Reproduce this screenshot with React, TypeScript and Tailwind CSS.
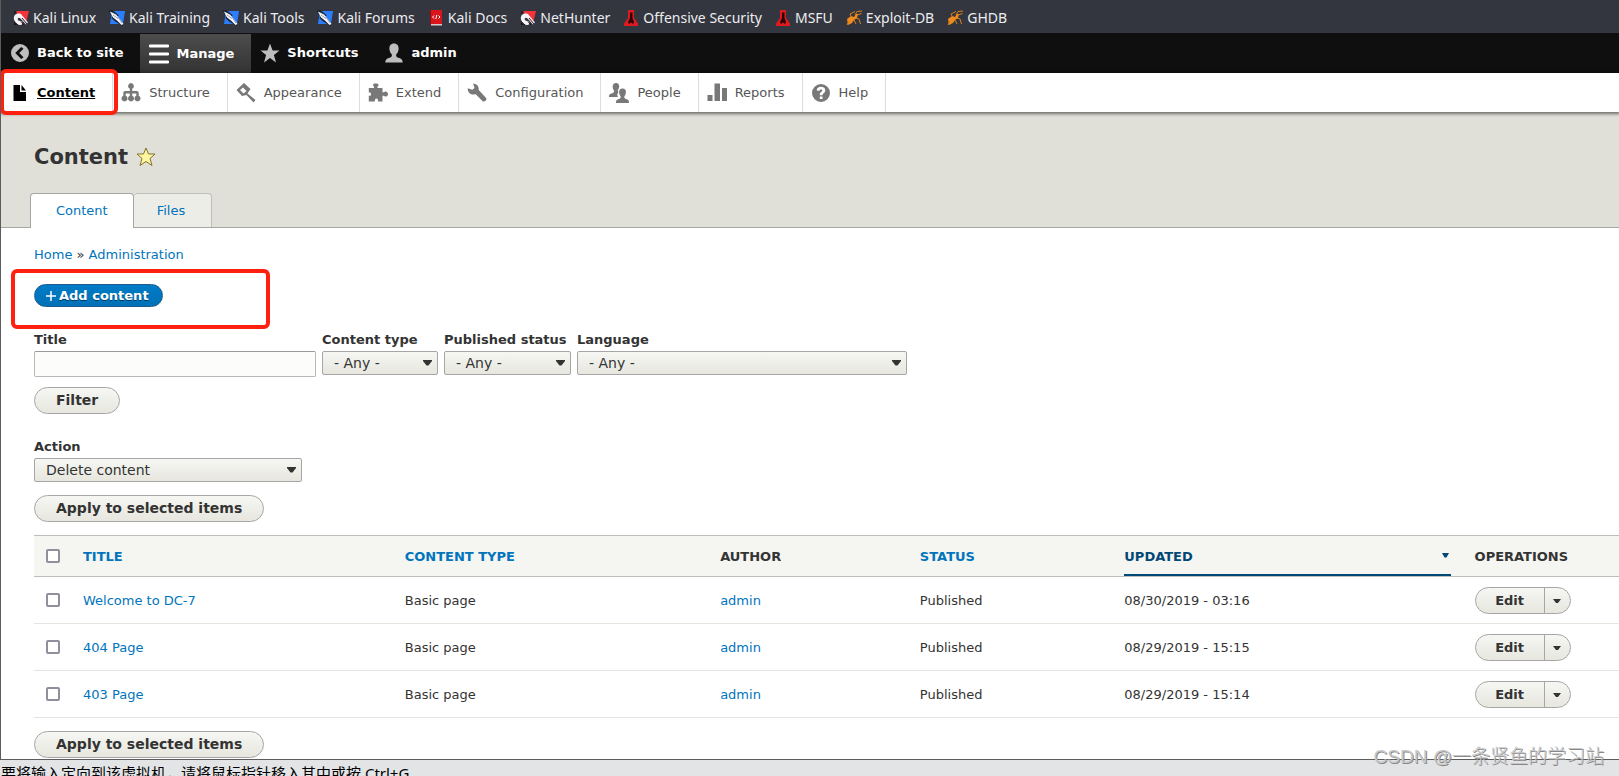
import { clsx } from "clsx";

type IconName =
  | "back"
  | "menu"
  | "star"
  | "user"
  | "file"
  | "structure"
  | "appearance"
  | "extend"
  | "config"
  | "people"
  | "reports"
  | "help";

type BookmarkKind = "dragon" | "kali" | "docs" | "offsec" | "bug";

const bookmarks: { label: string; kind: BookmarkKind }[] = [
  { label: "Kali Linux", kind: "dragon" },
  { label: "Kali Training", kind: "kali" },
  { label: "Kali Tools", kind: "kali" },
  { label: "Kali Forums", kind: "kali" },
  { label: "Kali Docs", kind: "docs" },
  { label: "NetHunter", kind: "dragon" },
  { label: "Offensive Security", kind: "offsec" },
  { label: "MSFU", kind: "offsec" },
  { label: "Exploit-DB", kind: "bug" },
  { label: "GHDB", kind: "bug" },
];

const toolbar: { label: string; icon: IconName }[] = [
  { label: "Back to site", icon: "back" },
  { label: "Manage", icon: "menu" },
  { label: "Shortcuts", icon: "star" },
  { label: "admin", icon: "user" },
];

const tray: { label: string; icon: IconName }[] = [
  { label: "Content", icon: "file" },
  { label: "Structure", icon: "structure" },
  { label: "Appearance", icon: "appearance" },
  { label: "Extend", icon: "extend" },
  { label: "Configuration", icon: "config" },
  { label: "People", icon: "people" },
  { label: "Reports", icon: "reports" },
  { label: "Help", icon: "help" },
];

const rows = [
  { title: "Welcome to DC-7", updated: "08/30/2019 - 03:16" },
  { title: "404 Page", updated: "08/29/2019 - 15:15" },
  { title: "403 Page", updated: "08/29/2019 - 15:14" },
];

const pill =
  "rounded-full border border-[#a6a6a6] bg-linear-to-b from-[#f6f6f3] to-[#e7e7df] font-bold text-[#333] hover:to-[#f6f6f3]";
const button = clsx(pill, "block h-[27px] px-[21px] pb-[2px] text-[14px] leading-4");
const link = "text-[#0074bd] hover:underline";
const cell = "px-3 pt-[2px]";

function BookmarkIcon({ kind }: { kind: BookmarkKind }) {
  return (
    <svg width="16" height="16" viewBox="0 0 16 16" className="shrink-0" aria-hidden="true">
      {kind === "dragon" && (
        <>
          <path d="M3 1h13l-3 12-9-9z" fill="#f5333b" />
          <path d="M1 1.500h3L1.500 4zM1 11l3 4H1z" fill="#17181c" />
          <path d="M1 9.500C0 5 4 2.500 8 4l7 8.500-2 2-5.500-6C6 7 4 8 5 10c1 1.500 3 .5 4.500 2l-1 3C5 15.500 2 13.500 1 9.500z" fill="#f3f3f5" />
          <path d="M1 11.500l4 3.500M8 11.500l3 3.500M9 8l5 6" stroke="#3a1020" fill="none" />
        </>
      )}
      {kind === "kali" && (
        <>
          <path d="M3 1h13l-2 13H1z" fill="#2b7dfb" />
          <path d="M0 1h3l6 5M3 7l4 4 7 4" stroke="#20242e" strokeWidth="2" fill="none" />
          <path d="M1 1.500l6 3 3.500 4L14.500 14l-2 1-4.500-4.500-4-3z" fill="#f4f6fa" />
          <path d="M4 5l5 3.500M9 7l4 6" stroke="#7b8698" strokeWidth=".8" fill="none" />
        </>
      )}
      {kind === "docs" && (
        <>
          <path d="M3 0h11v15H2V1z" fill="#d9151c" />
          <path d="M2 1l1-1v15H2z" fill="#8e0d12" />
          <path d="M3 14h11v1.500H3z" fill="#d5c9c9" />
          <path d="M6 5.500L4.500 7 6 8.500M10.500 5.500L12 7l-1.500 1.500M8.800 5l-1 4" stroke="#fff" fill="none" />
        </>
      )}
      {kind === "offsec" && (
        <>
          <path d="M5 0h6v8l4 5.500V16H1v-2.500L5 8z" fill="#dc1a20" />
          <path d="M7 2.500h2.500V8l1.500 4-1 2-2-1.500L6 14l-1-2 2-4z" fill="#2a0507" />
        </>
      )}
      {kind === "bug" && (
        <>
          <path d="M1 9l4-3 3 1 2-3h2l-1 4-3 2-2 3-4 2z" fill="#f08a1c" />
          <path d="M5 6L4 4l5-2.500M9 5l2-3.500L16 1M11 5l4.500-1.500M10 8l3 1 1.500 5M8 10l2 4M3 11l-2 4" stroke="#d9801c" fill="none" />
        </>
      )}
    </svg>
  );
}

function Icon({ name, className }: { name: IconName; className?: string }) {
  return (
    <svg width="20" height="20" viewBox="0 0 20 20" fill="currentColor" className={className} aria-hidden="true">
      {name === "back" && (
        <path fillRule="evenodd" d="M10 1a9 9 0 100 18 9 9 0 000-18zm3.500 4.800L9.300 10l4.200 4.200-2.300 1.800-6-6 6-6z" />
      )}
      {name === "menu" && (
        <path d="M1 .5h18a1 1 0 011 1v1a1 1 0 01-1 1H1a1 1 0 01-1-1v-1a1 1 0 011-1zM1 8.500h18a1 1 0 011 1v1a1 1 0 01-1 1H1a1 1 0 01-1-1v-1a1 1 0 011-1zM1 16.500h18a1 1 0 011 1v1a1 1 0 01-1 1H1a1 1 0 01-1-1v-1a1 1 0 011-1z" />
      )}
      {name === "star" && <path d="M10 .5l2.600 7H19.500l-5.600 4.500L16 19.500 10 15 4 19.500 6.100 12 .5 7.500h6.900z" />}
      {name === "user" && (
        <path d="M10 .5c3.300 0 4.700 2.400 4.600 5.200-.1 2.300-1 4.300-2.300 5.500-.6 2 .2 3 2 3.600 2.600.8 4.200 1.400 4.400 4.700H1.300c.2-3.300 1.800-3.900 4.400-4.700 1.800-.6 2.600-1.600 2-3.600-1.300-1.200-2.200-3.200-2.300-5.500C5.300 2.900 6.700.5 10 .5z" />
      )}
      {name === "file" && <path d="M4.500 2H11v7h6v9H4.500zM12.500 2l4.500 5.500h-4.500z" />}
      {name === "structure" && (
        <path d="M10 0a3 3 0 011.200 5.700V8h4.300c1.700 0 2.200.8 2.200 2.200v2.500a3 3 0 11-2.400 0v-2.300h-4.100v2.300a3 3 0 11-2.400 0v-2.300H4.700v2.300a3 3 0 11-2.400 0v-2.500C2.300 8.800 2.800 8 4.500 8h4.300V5.700A3 3 0 0110 0z" />
      )}
      {name === "appearance" && (
        <path fillRule="evenodd" d="M.5 7L8 0l6.500 6-3 4.500 8 6.500-2 2.500-7-7.500L6 13zm3.500 0l3.500 3.500L10.500 8 7 4.500z" />
      )}
      {name === "extend" && (
        <path d="M6 5V3.500L4.800 2.200 6 .5h3.500l1.300 1.700L9.500 3.500V5h5v4.200h1.200C16.700 7.800 20 8.300 20 11s-3.300 3.200-4.300 1.800h-1.200v5.700h-4.500c.3-2-.4-3-1.500-3s-2 1-1.700 3H.8v-5.800c1.300 0 2.200.3 2.200-1.500S2.100 9.500.8 9.500V5z" />
      )}
      {name === "config" && (
        <path d="M.7 5.200l4.700 1.600L7.500 5 6.200.5c3.300.1 6 2.600 5.500 6.600l7.200 7.700c1.700 2-1.600 5-3.500 3.200L8.500 11C4.500 12.800.4 9.500.7 5.200z" />
      )}
      {name === "people" && (
        <path d="M7 0c2.200 0 3.300 1.600 3.200 3.500-.1 1.500-.6 2.500-1.400 3.500l.5 2.500C7.800 11 8.300 12.500 9 14H0c0-3 1.200-3.200 3.300-3.800 1.500-.4 2-1 1.700-2.700C4.100 6.500 3.700 5 3.700 3.500 3.700 1.400 4.900 0 7 0zM13.500 5.500c2.400 0 3.500 1.700 3.400 3.800-.1 1.600-.7 3-1.500 3.900-.4 1.500.2 2.300 1.500 2.700 2.200.6 3.100 1 3.100 4.100H7c0-3.100.9-3.500 3.100-4.100 1.300-.4 1.900-1.200 1.500-2.700-.8-.9-1.400-2.300-1.500-3.900-.1-2.100 1-3.800 3.400-3.800z" />
      )}
      {name === "reports" && <path d="M.5 12h5v6h-5zM7.500.5h5.500V18H7.500zM15 5h5v13h-5z" />}
      {name === "help" && (
        <path
          fillRule="evenodd"
          d="M10 1a9 9 0 100 18 9 9 0 000-18zm-1.200 12.500h2.700V16H8.800zM5.700 7.500C5.800 5 7.500 3.800 10 3.800s4.300 1.400 4.300 3.600c0 2.600-2.800 2.500-2.800 4.800H8.800c0-3.200 2.500-3.300 2.500-4.600 0-.8-.5-1.200-1.300-1.200-.9 0-1.400.4-1.500 1.400z"
        />
      )}
    </svg>
  );
}

function SelectField({ id, label, options, className }: { id: string; label: string; options: string[]; className: string }) {
  return (
    <div className={className}>
      <label htmlFor={id} className="block leading-[22px] font-bold">
        {label}
      </label>
      <div className="relative">
        <select
          id={id}
          className="block h-6 w-full appearance-none rounded-xs border border-[#a6a6a6] bg-linear-to-b from-[#f6f6f3] to-[#e7e7df] pr-6 pl-[11px] text-[14px] leading-5 text-[#333]"
        >
          {options.map((option) => (
            <option key={option}>{option}</option>
          ))}
        </select>
        <svg width="9" height="6" viewBox="0 0 9 6" className="pointer-events-none absolute top-[9px] right-[6px]" aria-hidden="true">
          <path d="M0 0h9v1L5.500 5.500h-2L0 1z" fill="#333" />
        </svg>
      </div>
    </div>
  );
}

function Checkbox({ label }: { label: string }) {
  return (
    <input
      type="checkbox"
      aria-label={label}
      className="block size-[14px] appearance-none rounded-xs border-2 border-[#8f8f9d] bg-white checked:bg-[#0074bd]"
    />
  );
}

function ContentTable() {
  return (
    <table className="w-full table-fixed border-collapse text-left">
      <colgroup>
        <col className="w-[37px]" />
        <col className="w-[20.3%]" />
        <col className="w-[19.9%]" />
        <col className="w-[12.6%]" />
        <col className="w-[12.9%]" />
        <col className="w-[22.1%]" />
        <col />
      </colgroup>
      <thead>
        <tr className="h-[41px] border-y border-[#bfbfba] bg-[#f5f5f2] uppercase">
          <th className="pl-3">
            <Checkbox label="Select all rows" />
          </th>
          <th className={cell}>
            <a href="#title" className={link}>Title</a>
          </th>
          <th className={cell}>
            <a href="#type" className={link}>Content type</a>
          </th>
          <th className={cell}>Author</th>
          <th className={cell}>
            <a href="#status" className={link}>Status</a>
          </th>
          <th className="px-3">
            <a href="#updated" className="flex h-10 items-center justify-between border-b-2 border-[#004875] pt-1 pr-[2px] text-[#004875]">
              Updated
              <svg width="7" height="5" viewBox="0 0 7 5" className="mb-1" aria-hidden="true">
                <path d="M0 0h7L4.500 4.500h-2z" fill="#004875" />
              </svg>
            </a>
          </th>
          <th className={cell}>Operations</th>
        </tr>
      </thead>
      <tbody>
        {rows.map((row) => (
          <tr key={row.title} className="h-[47px] border-b border-[#e6e4df]">
            <td className="pl-3">
              <Checkbox label={`Select ${row.title}`} />
            </td>
            <td className={cell}>
              <a href="#node" className={link}>{row.title}</a>
            </td>
            <td className={cell}>Basic page</td>
            <td className={cell}>
              <a href="#admin" className={link}>admin</a>
            </td>
            <td className={cell}>Published</td>
            <td className={cell}>{row.updated}</td>
            <td className="px-3">
              <div className={clsx(pill, "flex h-[27px] w-24 overflow-hidden")}>
                <button className="flex-1 border-r border-[#a6a6a6] pt-px">Edit</button>
                <button className="flex w-[25px] items-center justify-center pt-[2px]" aria-label={`More actions for ${row.title}`}>
                  <svg width="8" height="4" viewBox="0 0 8 4" aria-hidden="true">
                    <path d="M0 0h8L5 4H3z" fill="#333" />
                  </svg>
                </button>
              </div>
            </td>
          </tr>
        ))}
      </tbody>
    </table>
  );
}

export default function App() {
  return (
    <div className="relative flex h-screen flex-col overflow-hidden bg-white font-['DejaVu_Sans',sans-serif] text-[13px] leading-5 text-[#333]">
      <div className="flex min-h-0 flex-1 flex-col overflow-hidden border-b border-l border-[#5c5c5c]">
        <nav className="flex h-[33px] shrink-0 items-center gap-[13px] bg-[#33363f] pt-[2px] pl-3 font-['Noto_Sans',sans-serif] text-[14px] text-[#ececee]">
          {bookmarks.map((item) => (
            <a key={item.label} href="#bookmark" className="flex items-center gap-1 whitespace-nowrap">
              <BookmarkIcon kind={item.kind} />
              {item.label}
            </a>
          ))}
        </nav>

        <nav className="flex h-10 shrink-0 bg-[#0f0f0f] font-bold text-white">
          {toolbar.map((item) => (
            <a
              key={item.label}
              href="#toolbar"
              className={clsx(
                "relative flex items-center pr-[17px] pl-9",
                item.icon === "menu" && "mt-px bg-linear-to-b from-[#4d4d4d] to-[#333]"
              )}
            >
              <Icon name={item.icon} className={clsx("absolute left-[9px]", item.icon === "menu" ? "text-white" : "text-[#bebebe]")} />
              {item.label}
            </a>
          ))}
        </nav>

        <nav className="relative z-10 flex h-[39px] shrink-0 bg-white shadow-[0_1px_3px_1px_rgba(0,0,0,0.5)]">
          {tray.map((item) => (
            <a
              key={item.label}
              href="#tray"
              className={clsx(
                "relative flex items-center border-r border-[#ddd] pr-[17px] pl-9",
                item.icon === "file" ? "font-bold text-black underline" : "text-[#565656]"
              )}
            >
              <Icon name={item.icon} className={clsx("absolute left-2", item.icon === "file" ? "text-black" : "text-[#787878]")} />
              {item.label}
            </a>
          ))}
          <div className="pointer-events-none absolute top-[-4px] left-[-1px] h-[46px] w-[118px] rounded-md border-4 border-[#ff2010]" />
        </nav>

        <header className="shrink-0 border-b border-[#a6a6a6] bg-[#e0e0d8] pt-[31px]">
          <div className="flex items-center gap-2 px-[33px]">
            <h1 className="text-[21px] leading-7 font-bold">Content</h1>
            <button aria-label="Add to shortcuts">
              <svg width="20" height="20" viewBox="0 0 20 20" className="block" aria-hidden="true">
                <path
                  d="M10 1l2.500 6h6.500l-5 4.500 2 7-6-4-6 4 2-7L1 7h6.500z"
                  fill="#fdf6a0"
                  stroke="#84702c"
                  strokeLinejoin="round"
                />
              </svg>
            </button>
          </div>
          <div className="-mb-px flex pt-[22px] pl-[29px]">
            <a href="#content" className="rounded-t-[4px] border border-b-0 border-[#a6a6a6] bg-white px-[25px] py-[7px] text-[#0074bd]">
              Content
            </a>
            <a href="#files" className="mb-px rounded-t-[4px] border border-b-0 border-l-0 border-[#bfbfba] bg-[#edede8] pt-[7px] pr-[26px] pb-[6px] pl-[23px] text-[#0074bd]">
              Files
            </a>
          </div>
        </header>

        <main className="pl-[33px]">
          <div className="pt-[17px]">
            <a href="#home" className={link}>Home</a> » <a href="#administration" className={link}>Administration</a>
          </div>
          <div className="relative pt-[19px]">
            <button className="flex h-[23px] items-center rounded-full border border-[#1e5c90] bg-linear-to-b from-[#007bc6] to-[#0071b8] pr-[13px] pl-[11px] font-bold text-white [text-shadow:0_1px_rgba(0,0,0,0.5)]">
              <svg width="10" height="10" viewBox="0 0 10 10" className="mr-[3px]" aria-hidden="true">
                <path d="M5 0v10M0 5h10" stroke="#fff" strokeWidth="1.500" />
              </svg>
              Add content
            </button>
            <div className="pointer-events-none absolute top-1 left-[-23px] h-[60px] w-[259px] rounded-md border-4 border-[#ff2010]" />
          </div>

          <form className="pt-[22px]" onSubmit={(e) => e.preventDefault()}>
            <div className="flex items-start gap-[6px]">
              <div className="w-[282px]">
                <label htmlFor="title" className="block leading-[22px] font-bold">Title</label>
                <input id="title" type="text" className="block h-[26px] w-full rounded-xs border border-[#b8b8b8] border-t-[#999] bg-[#fcfcfa] px-2" />
              </div>
              <SelectField id="type" label="Content type" options={["- Any -", "Article", "Basic page"]} className="w-[116px]" />
              <SelectField id="status" label="Published status" options={["- Any -", "Published", "Unpublished"]} className="w-[127px] whitespace-nowrap" />
              <SelectField id="language" label="Language" options={["- Any -", "English"]} className="w-[330px]" />
            </div>
            <button className={clsx(button, "mt-[10px]")}>Filter</button>
          </form>

          <form className="pt-[22px]" onSubmit={(e) => e.preventDefault()}>
            <SelectField id="action" label="Action" options={["Delete content", "Publish content"]} className="w-[268px]" />
            <button className={clsx(button, "my-[13px]")}>Apply to selected items</button>
            <ContentTable />
            <button className={clsx(button, "mt-[13px]")}>Apply to selected items</button>
          </form>
        </main>
      </div>

      <footer className="h-4 shrink-0 bg-[#e3e4e6] pt-[3px] pl-px font-['Noto_Sans','Noto_Sans_CJK_SC',sans-serif] text-[15px] leading-5 text-black">
        要将输入定向到该虚拟机，请将鼠标指针移入其中或按 Ctrl+G。
      </footer>

      <div className="pointer-events-none absolute right-[15px] bottom-[5px] font-['Liberation_Sans','Noto_Sans_CJK_SC',sans-serif] text-[19px] leading-7 font-light text-[#c8c8c8] [text-shadow:1px_1px_0_#888]">
        CSDN @一条贤鱼的学习站
      </div>
    </div>
  );
}
